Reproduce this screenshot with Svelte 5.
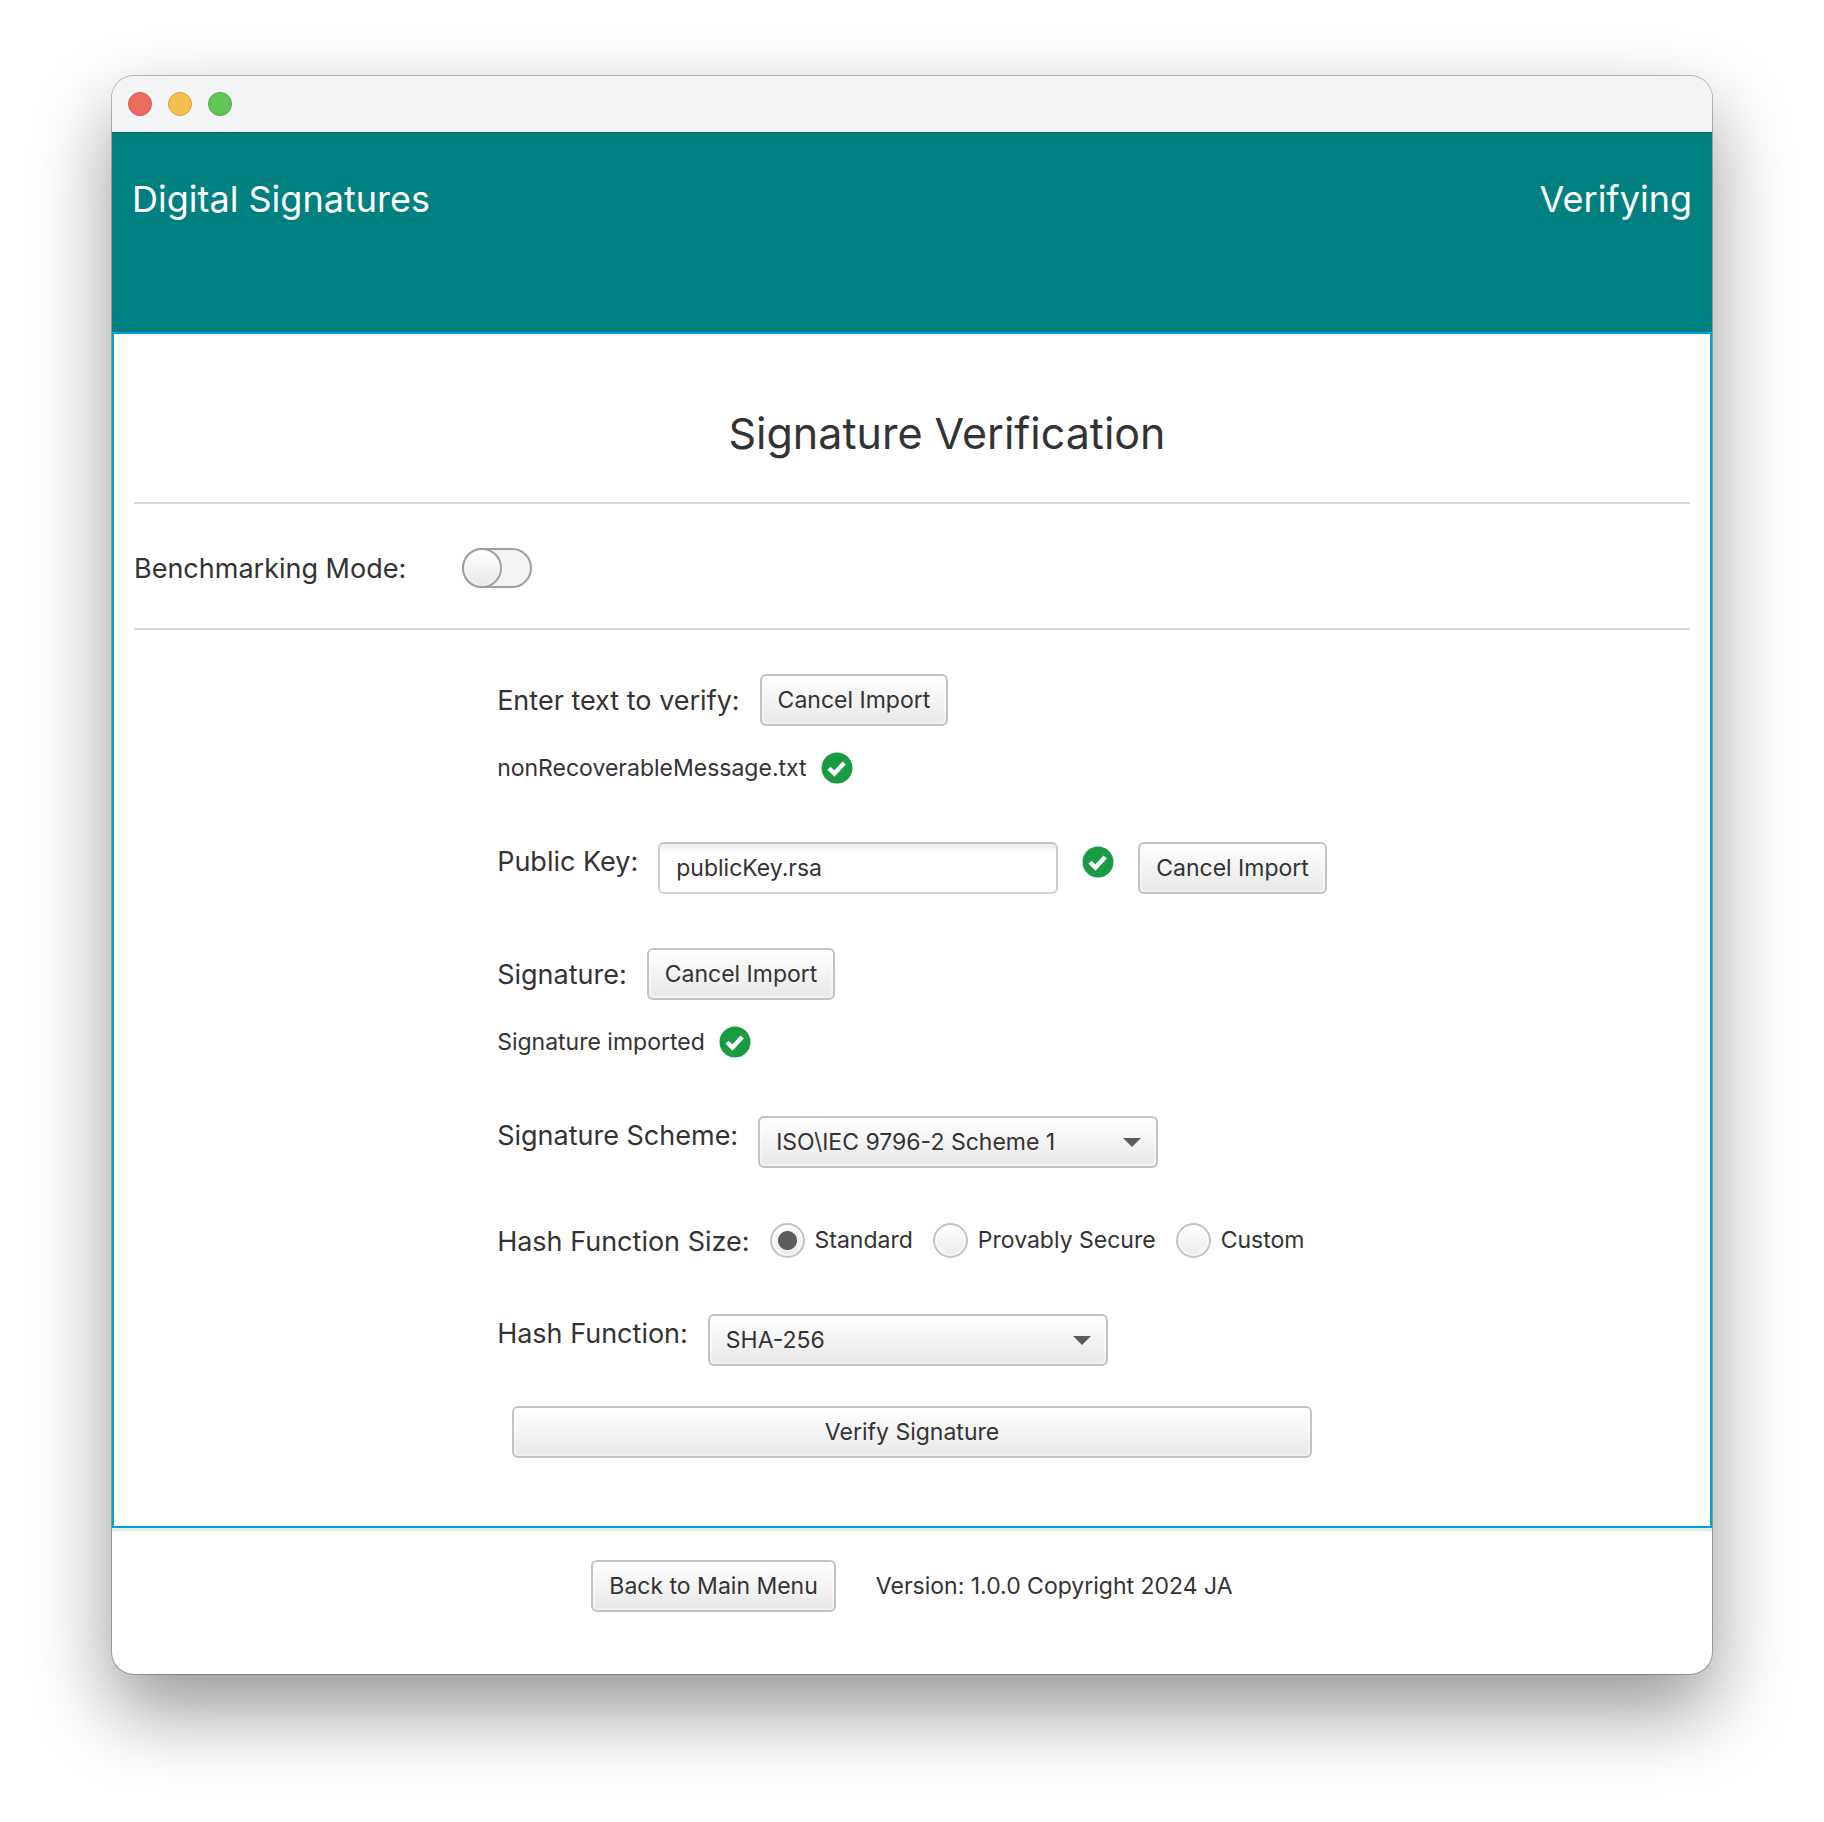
<script>
  let benchmarking = $state(false);
  let publicKey = $state('publicKey.rsa');
  let scheme = $state('ISO\\IEC 9796-2 Scheme 1');
  let hashSize = $state('Standard');
  let hashFunction = $state('SHA-256');

  const schemes = ['ISO\\IEC 9796-2 Scheme 1'];
  const hashSizes = ['Standard', 'Provably Secure', 'Custom'];
  const hashFunctions = ['SHA-256'];
</script>

{#snippet check()}
  <svg class="check" viewBox="0 0 32 32" aria-hidden="true">
    <circle cx="16" cy="16" r="15.5" fill="#1a9b43" />
    <path d="M8 16.2 L13.4 21.6 L23.2 11" fill="none" stroke="#fff" stroke-width="4.4" />
  </svg>
{/snippet}

<div class="desktop">
  <div class="window">
    <div class="titlebar">
      <button class="light close" aria-label="Close"></button>
      <button class="light minimise" aria-label="Minimise"></button>
      <button class="light zoom" aria-label="Zoom"></button>
    </div>

    <header>
      <span>Digital Signatures</span>
      <span>Verifying</span>
    </header>

    <main>
      <h1>Signature Verification</h1>

      <div class="mode">
        <label class="label" for="benchmark">Benchmarking Mode:</label>
        <input id="benchmark" class="toggle" type="checkbox" bind:checked={benchmarking} />
      </div>

      <form onsubmit={(e) => e.preventDefault()}>
        <div class="group">
          <div class="row middle">
            <span class="label">Enter text to verify:</span>
            <button type="button" class="btn">Cancel Import</button>
          </div>
          <div class="status">
            <span>nonRecoverableMessage.txt</span>
            {@render check()}
          </div>
        </div>

        <div class="row">
          <label class="label" for="key">Public Key:</label>
          <input id="key" class="field" type="text" bind:value={publicKey} />
          <span class="key-check">{@render check()}</span>
          <button type="button" class="btn">Cancel Import</button>
        </div>

        <div class="group">
          <div class="row middle">
            <span class="label">Signature:</span>
            <button type="button" class="btn">Cancel Import</button>
          </div>
          <div class="status">
            <span>Signature imported</span>
            {@render check()}
          </div>
        </div>

        <div class="row">
          <label class="label" for="scheme">Signature Scheme:</label>
          <span class="combo">
            <select id="scheme" bind:value={scheme}>
              {#each schemes as s}<option>{s}</option>{/each}
            </select>
          </span>
        </div>

        <div class="row" role="radiogroup" aria-labelledby="size-label">
          <span class="label" id="size-label">Hash Function Size:</span>
          <div class="options">
            {#each hashSizes as size}
              <label class="option">
                <input type="radio" name="size" value={size} bind:group={hashSize} />
                {size}
              </label>
            {/each}
          </div>
        </div>

        <div class="row">
          <label class="label" for="hash">Hash Function:</label>
          <span class="combo">
            <select id="hash" bind:value={hashFunction}>
              {#each hashFunctions as h}<option>{h}</option>{/each}
            </select>
          </span>
        </div>

        <button type="submit" class="btn verify">Verify Signature</button>
      </form>
    </main>

    <footer>
      <button type="button" class="btn">Back to Main Menu</button>
      <span>Version: 1.0.0 Copyright 2024 JA</span>
    </footer>
  </div>
</div>

<style>
  :global(body) {
    background: #fff;
  }

  .desktop,
  .desktop *,
  .desktop *::before {
    box-sizing: border-box;
  }

  .desktop {
    padding: 76px 112px 148px;
    overflow: hidden;
    font-family: Inter, Roboto, sans-serif;
    font-size: 23px;
    line-height: 36px;
    color: #333;
  }

  .window {
    border-radius: 22px;
    background: #fff;
    overflow: hidden;
    box-shadow:
      0 0 0 1px rgba(0, 0, 0, 0.25),
      0 36px 80px rgba(0, 0, 0, 0.42);
  }

  .titlebar {
    display: flex;
    align-items: center;
    gap: 16px;
    height: 56px;
    padding: 0 16px;
    background: #f3f4f6;
  }

  .light {
    width: 24px;
    height: 24px;
    padding: 0;
    border: 1px solid;
    border-radius: 50%;
  }

  .close {
    background: #ec6a5e;
    border-color: #d45549;
  }

  .minimise {
    background: #f4bf4f;
    border-color: #d9a13d;
  }

  .zoom {
    background: #61c554;
    border-color: #4fa73f;
  }

  header {
    display: flex;
    justify-content: space-between;
    padding: 42px 20px 109px;
    border-top: 1px solid #005f5c;
    background: #008080;
    color: #fff;
    font-size: 36px;
    line-height: 48px;
  }

  main {
    border: 2px solid #039ed3;
    padding: 0 20px 68px;
  }

  h1 {
    margin: 0;
    padding: 69px 0 39px 70px;
    font-size: 43px;
    font-weight: 400;
    line-height: 60px;
    text-align: center;
  }

  .mode {
    display: flex;
    align-items: center;
    gap: 56px;
    height: 128px;
    padding-top: 4px;
    border: solid #d8d8d8;
    border-width: 2px 0;
  }

  .label {
    margin-bottom: -2px;
    font-size: 27px;
    line-height: 40px;
    white-space: nowrap;
  }

  .toggle {
    appearance: none;
    width: 70px;
    height: 40px;
    margin: 0;
    border: 2px solid #a0a0a0;
    border-radius: 20px;
    background: #f4f4f4;
  }

  .toggle::before {
    content: '';
    display: block;
    width: 40px;
    height: 40px;
    margin: -2px;
    border: 2px solid #a0a0a0;
    border-radius: 50%;
    background: linear-gradient(#fff, #e8e8e8);
    box-shadow: inset 0 0 0 1px #f8f8f8;
  }

  .toggle:checked::before {
    margin-left: 28px;
  }

  form {
    display: flex;
    flex-direction: column;
    gap: 54px;
    width: fit-content;
    margin: 0 auto;
    padding-top: 44px;
  }

  .row {
    display: flex;
    align-items: flex-start;
    gap: 20px;
  }

  .middle {
    align-items: center;
  }

  .btn,
  .field,
  select {
    height: 52px;
    margin: 0;
    padding: 0 16px;
    border: 2px solid #c3c3c3;
    border-radius: 6px;
    color: #333;
    font: inherit;
  }

  .btn,
  select {
    background: linear-gradient(#fff, #e8e8e8);
    box-shadow: inset 0 0 0 2px rgba(255, 255, 255, 0.4);
    white-space: nowrap;
  }

  .field {
    width: 400px;
    border-color: #c3c3c3 #cdcdcd #d3d3d3;
    background: linear-gradient(#ececec, #fff 10px);
  }

  .status {
    display: flex;
    align-items: center;
    gap: 14px;
    height: 40px;
    margin-top: 22px;
  }

  .check {
    display: block;
    width: 32px;
    height: 32px;
  }

  .key-check {
    padding: 4px;
  }

  .combo {
    position: relative;
  }

  .combo::after {
    content: '';
    position: absolute;
    top: 22px;
    right: 17px;
    border: solid transparent;
    border-width: 9px 9px 0;
    border-top-color: #5c5c5c;
    pointer-events: none;
  }

  select {
    display: block;
    appearance: none;
    width: 400px;
  }

  .options {
    display: flex;
    gap: 20px;
  }

  .option {
    display: flex;
    align-items: center;
    gap: 10px;
    white-space: nowrap;
  }

  .option input {
    appearance: none;
    width: 35px;
    height: 35px;
    margin: 0;
    border: 2px solid #c3c3c3;
    border-radius: 50%;
    background: linear-gradient(#fff, #ebebeb);
    box-shadow: inset 0 0 0 2px rgba(255, 255, 255, 0.5);
  }

  .option input:checked {
    background: radial-gradient(circle, #5c5c5c 9px, transparent 10px), linear-gradient(#fff, #ebebeb);
  }

  .options {
    height: 36px;
  }

  .row[role='radiogroup'] {
    height: 38px;
  }

  .verify {
    width: 800px;
    max-width: 100%;
    margin-top: -14px;
    align-self: center;
  }

  footer {
    display: flex;
    justify-content: center;
    align-items: center;
    gap: 40px;
    padding: 29px 20px 62px;
    border-top: 3px solid #e2ecf0;
  }
</style>
